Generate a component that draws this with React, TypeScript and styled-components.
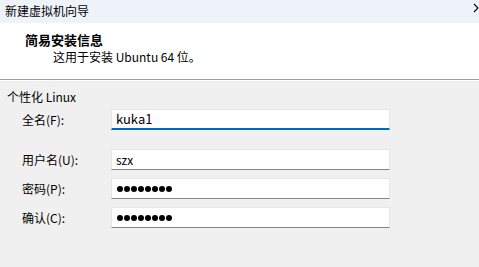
import React from "react";
import styled, { createGlobalStyle } from "styled-components";

const Global = createGlobalStyle`
  html, body {
    margin: 0;
    padding: 0;
  }
  body {
    width: 479px;
    height: 267px;
    overflow: hidden;
    background: #f0f0f0;
    font-family: "Noto Sans CJK SC", "Liberation Sans", sans-serif;
    font-size: 12px;
    color: #000;
  }
`;

const Window = styled.div`
  width: 479px;
  height: 267px;
  display: flex;
  flex-direction: column;
  background: #f0f0f0;
`;

const TitleBar = styled.div`
  height: 23px;
  flex: none;
  display: flex;
  align-items: center;
  justify-content: space-between;
  padding: 0 0 1px 5px;
  box-sizing: border-box;
  background: #eef3fa;
  & span {
    line-height: 14px;
  }
  & svg {
    margin-top: -6px;
  }
`;

const Header = styled.div`
  height: 57px;
  flex: none;
  box-sizing: border-box;
  background: #fff;
  border-bottom: 1px solid #a0a0a0;
  box-shadow: 0 1px 0 #fff;
  padding: 9px 0 0 25px;
  h3 {
    margin: 0;
    font-size: 13px;
    font-weight: 700;
    line-height: 16px;
  }
  p {
    margin: 1px 0 0 28px;
    line-height: 16px;
  }
`;

const Group = styled.div`
  padding: 9px 0 0 7px;
  h4 {
    margin: 0;
    font-weight: 400;
    font-size: 12px;
    line-height: 16px;
  }
`;

const Row = styled.div<{ $top: number }>`
  display: flex;
  align-items: center;
  margin-top: ${(p) => p.$top}px;
`;

const Label = styled.label`
  width: 104px;
  padding-left: 15px;
  box-sizing: border-box;
  flex: none;
  line-height: 16px;
`;

const Field = styled.div<{ $focused?: boolean }>`
  width: 279px;
  height: 21px;
  box-sizing: border-box;
  background: #fff;
  border: 1px solid #e6e6e6;
  border-bottom: ${(p) => (p.$focused ? "2px solid #0067c0" : "1px solid #868686")};
  padding-left: 4px;
  display: flex;
  align-items: center;
  font-size: ${(p) => (p.$focused ? 13 : 12)}px;
  line-height: 16px;
`;

const Dots = styled.div`
  display: flex;
  gap: 1px;
  padding-left: 1px;
  & i {
    width: 6px;
    height: 6px;
    border-radius: 50%;
    background: #000;
  }
`;

function Chevron() {
  return (
    <svg width="6" height="10" viewBox="0 0 6 10">
      <path d="M1 1 L5 5 L1 9" fill="none" stroke="#000" strokeWidth="1.1" />
    </svg>
  );
}

function Password({ n }: { n: number }) {
  return (
    <Dots>
      {Array.from({ length: n }).map((_, i) => (
        <i key={i} />
      ))}
    </Dots>
  );
}

export default function App() {
  return (
    <Window>
      <Global />
      <TitleBar>
        <span>新建虚拟机向导</span>
        <Chevron />
      </TitleBar>
      <Header>
        <h3>简易安装信息</h3>
        <p>这用于安装 Ubuntu 64 位。</p>
      </Header>
      <Group>
        <h4>个性化 Linux</h4>
        <Row $top={4}>
          <Label>全名(F):</Label>
          <Field $focused>kuka1</Field>
        </Row>
        <Row $top={19}>
          <Label>用户名(U):</Label>
          <Field>szx</Field>
        </Row>
        <Row $top={8}>
          <Label>密码(P):</Label>
          <Field>
            <Password n={8} />
          </Field>
        </Row>
        <Row $top={8}>
          <Label>确认(C):</Label>
          <Field>
            <Password n={8} />
          </Field>
        </Row>
      </Group>
    </Window>
  );
}
